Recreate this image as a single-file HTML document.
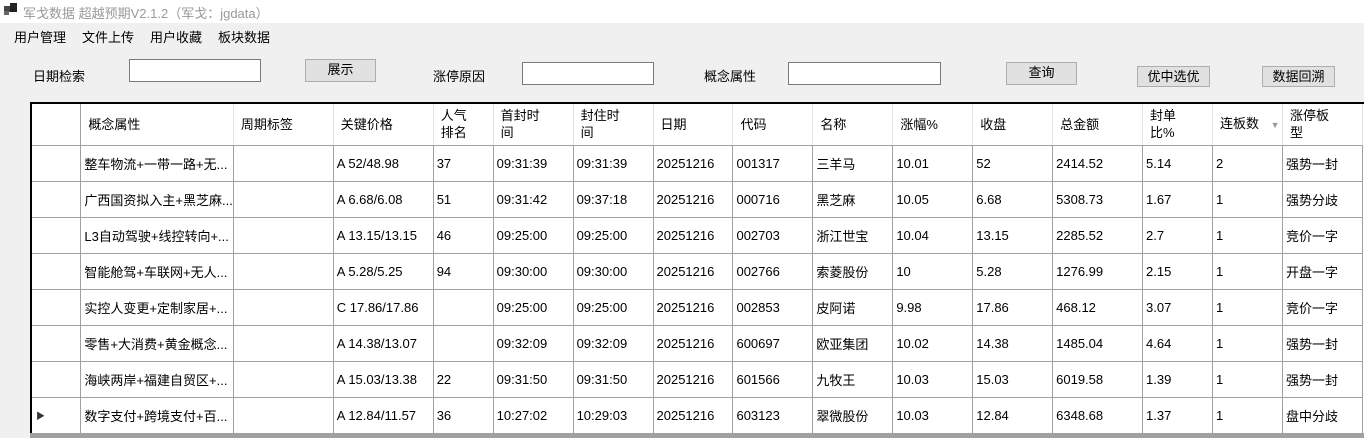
<!DOCTYPE html>
<html><head><meta charset="utf-8"><style>
*{margin:0;padding:0;box-sizing:border-box}
body{width:1364px;height:438px;overflow:hidden;background:#f0f0f0;font-family:"Liberation Sans","Noto Sans CJK SC",sans-serif;font-size:13px;color:#000;position:relative}
.abs{position:absolute}
.title{left:0;top:0;width:1364px;height:23px;background:#fff;color:#999;font-size:13px}
.menu span{position:absolute;top:27px}
.inp{background:#fff;border:1px solid #7a7a7a;height:23px}
.btn{background:#e1e1e1;border:1px solid #adadad;text-align:center;line-height:20px}
.grid{left:30px;top:102px;width:1334px;height:336px;background:#fff;border-top:2px solid #000;border-left:2px solid #000;overflow:hidden}
table{border-collapse:collapse;table-layout:fixed;position:absolute;left:-1px;top:0}
td{border-right:1px solid #a0a0a0;border-bottom:1px solid #a0a0a0;height:36px;padding:0 0 0 3px;white-space:nowrap;overflow:hidden;vertical-align:middle}
tr.h td{height:41px;border-right:1px solid #e3e3e3;padding-left:7px;line-height:17px;border-bottom:1px solid #a0a0a0}
tr.h td:first-child{border-right:1px solid #a0a0a0}
td:first-child{border-right:1px solid #a0a0a0}
.bar{left:30px;top:433px;width:1334px;height:5px;background:#a0a0a0}
</style></head><body>
<div class="abs title"><div class="abs" style="left:4px;top:6px;width:6px;height:6px;background:#444"></div><div class="abs" style="left:10px;top:3px;width:7px;height:9px;background:#222"></div><div class="abs" style="left:4px;top:11px;width:5px;height:4px;background:#666"></div><span class="abs" style="left:23px;top:3px">军戈数据 超越预期V2.1.2（军戈：jgdata）</span></div>
<div class="menu"><span style="left:14px">用户管理</span><span style="left:82px">文件上传</span><span style="left:150px">用户收藏</span><span style="left:218px">板块数据</span></div>
<span class="abs" style="left:33px;top:66px">日期检索</span>
<div class="abs inp" style="left:129px;top:59px;width:132px"></div>
<div class="abs btn" style="left:305px;top:59px;width:71px;height:23px">展示</div>
<span class="abs" style="left:433px;top:66px">涨停原因</span>
<div class="abs inp" style="left:522px;top:62px;width:132px"></div>
<span class="abs" style="left:704px;top:66px">概念属性</span>
<div class="abs inp" style="left:788px;top:62px;width:153px"></div>
<div class="abs btn" style="left:1006px;top:62px;width:71px;height:23px">查询</div>
<div class="abs btn" style="left:1137px;top:66px;width:73px;height:21px">优中选优</div>
<div class="abs btn" style="left:1262px;top:66px;width:73px;height:21px">数据回溯</div>
<div class="abs grid"><table>
<colgroup><col style="width:50px"><col style="width:148px"><col style="width:100px"><col style="width:100px"><col style="width:60px"><col style="width:80px"><col style="width:80px"><col style="width:80px"><col style="width:80px"><col style="width:80px"><col style="width:80px"><col style="width:80px"><col style="width:90px"><col style="width:70px"><col style="width:70px"><col style="width:80px"></colgroup>
<tr class="h"><td></td><td>概念属性</td><td>周期标签</td><td>关键价格</td><td>人气<br>排名</td><td>首封时<br>间</td><td>封住时<br>间</td><td>日期</td><td>代码</td><td>名称</td><td>涨幅%</td><td>收盘</td><td>总金额</td><td>封单<br>比%</td><td>连板数 <span style="color:#999;font-size:9px;margin-left:8px">▼</span></td><td>涨停板<br>型</td></tr>
<tr><td></td><td>整车物流+一带一路+无...</td><td></td><td>A 52/48.98</td><td>37</td><td>09:31:39</td><td>09:31:39</td><td>20251216</td><td>001317</td><td>三羊马</td><td>10.01</td><td>52</td><td>2414.52</td><td>5.14</td><td>2</td><td>强势一封</td></tr>
<tr><td></td><td>广西国资拟入主+黑芝麻...</td><td></td><td>A 6.68/6.08</td><td>51</td><td>09:31:42</td><td>09:37:18</td><td>20251216</td><td>000716</td><td>黑芝麻</td><td>10.05</td><td>6.68</td><td>5308.73</td><td>1.67</td><td>1</td><td>强势分歧</td></tr>
<tr><td></td><td>L3自动驾驶+线控转向+...</td><td></td><td>A 13.15/13.15</td><td>46</td><td>09:25:00</td><td>09:25:00</td><td>20251216</td><td>002703</td><td>浙江世宝</td><td>10.04</td><td>13.15</td><td>2285.52</td><td>2.7</td><td>1</td><td>竞价一字</td></tr>
<tr><td></td><td>智能舱驾+车联网+无人...</td><td></td><td>A 5.28/5.25</td><td>94</td><td>09:30:00</td><td>09:30:00</td><td>20251216</td><td>002766</td><td>索菱股份</td><td>10</td><td>5.28</td><td>1276.99</td><td>2.15</td><td>1</td><td>开盘一字</td></tr>
<tr><td></td><td>实控人变更+定制家居+...</td><td></td><td>C 17.86/17.86</td><td></td><td>09:25:00</td><td>09:25:00</td><td>20251216</td><td>002853</td><td>皮阿诺</td><td>9.98</td><td>17.86</td><td>468.12</td><td>3.07</td><td>1</td><td>竞价一字</td></tr>
<tr><td></td><td>零售+大消费+黄金概念...</td><td></td><td>A 14.38/13.07</td><td></td><td>09:32:09</td><td>09:32:09</td><td>20251216</td><td>600697</td><td>欧亚集团</td><td>10.02</td><td>14.38</td><td>1485.04</td><td>4.64</td><td>1</td><td>强势一封</td></tr>
<tr><td></td><td>海峡两岸+福建自贸区+...</td><td></td><td>A 15.03/13.38</td><td>22</td><td>09:31:50</td><td>09:31:50</td><td>20251216</td><td>601566</td><td>九牧王</td><td>10.03</td><td>15.03</td><td>6019.58</td><td>1.39</td><td>1</td><td>强势一封</td></tr>
<tr><td style="font-size:9px;padding-left:5px;color:#333">▶</td><td>数字支付+跨境支付+百...</td><td></td><td>A 12.84/11.57</td><td>36</td><td>10:27:02</td><td>10:29:03</td><td>20251216</td><td>603123</td><td>翠微股份</td><td>10.03</td><td>12.84</td><td>6348.68</td><td>1.37</td><td>1</td><td>盘中分歧</td></tr>
</table></div>
<div class="abs bar"></div>
</body></html>
